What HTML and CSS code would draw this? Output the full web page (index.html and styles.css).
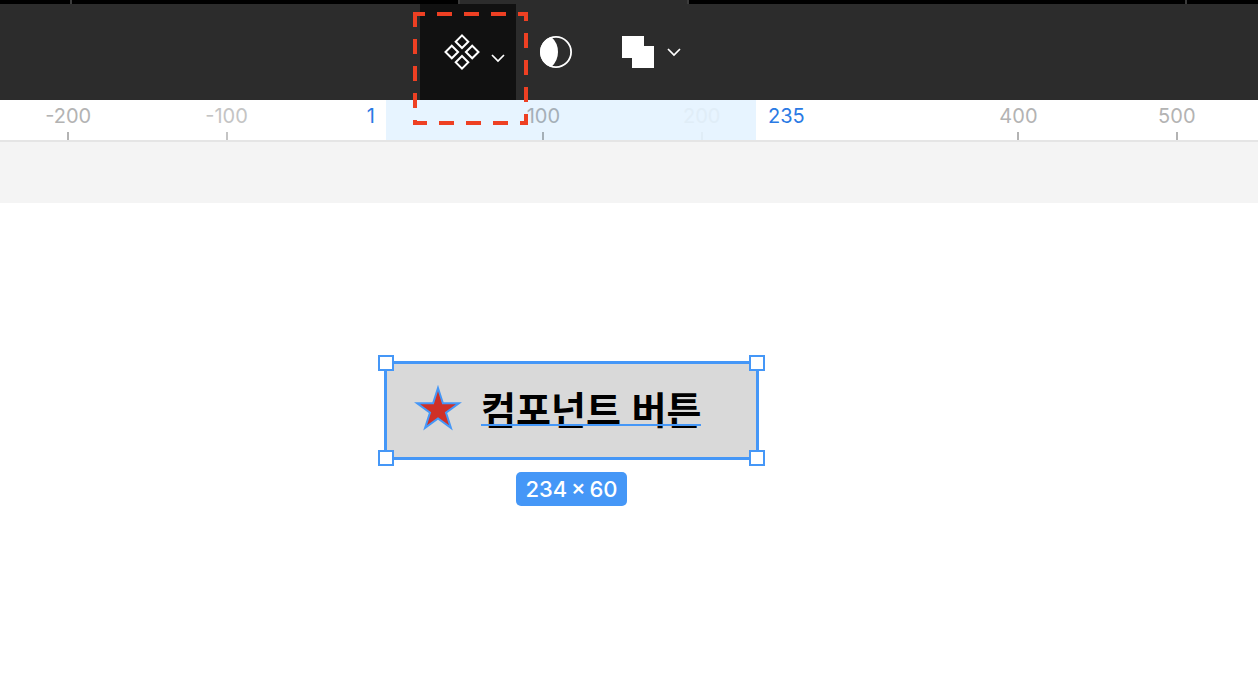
FILE: index.html
```html
<!DOCTYPE html>
<html lang="ko">
<head>
<meta charset="utf-8">
<meta name="viewport" content="width=device-width, initial-scale=1">
<title>컴포넌트 버튼</title>
<link rel="stylesheet" href="styles.css">
</head>
<body>
    <div class="tabs">
        <div class="tab tabFirst"></div>
        <div class="tab tabSecond"></div>
        <div class="tab tabActive"></div>
        <div class="tab tabLong"></div>
    </div>
    <header class="toolbar">
        <button type="button" class="tool toolActive" aria-label="Create component">
            <svg width="96" height="96" viewBox="0 0 96 96" fill="none" stroke="#fff" stroke-width="2">
                <path d="M42 31.4l6.3 6.3-6.3 6.3-6.3-6.3zM31.8 41.7l6.3 6.3-6.3 6.3-6.3-6.3zM52.2 41.7l6.3 6.3-6.3 6.3-6.3-6.3zM42 52l6.3 6.3-6.3 6.3-6.3-6.3z"/>
                <path d="M72 51l6 6 6-6" stroke-width="1.7"/>
            </svg>
        </button>
        <button type="button" class="tool" aria-label="Use as mask">
            <svg width="80" height="96" viewBox="0 0 80 96">
                <circle cx="40" cy="48" r="15.1" fill="none" stroke="#fff" stroke-width="1.8"/>
                <path d="M35 32.8a16 16 0 0 0 0 30.4q7-6 7-15.2t-7-15.2z" fill="#fff"/>
            </svg>
        </button>
        <button type="button" class="tool" aria-label="Union selection">
            <svg width="100" height="96" viewBox="0 0 100 96">
                <path d="M26 32h22v10h10v22H36V54H26z" fill="#fff"/>
                <path d="M72 45l6 6 6-6" fill="none" stroke="#fff" stroke-width="1.7"/>
            </svg>
        </button>
    </header>

    <div class="ruler">
        <div class="range">
            <span class="rangeStart">1</span>
            <span class="rangeEnd">235</span>
        </div>
        <div class="ticks">
            <div class="tick">-200</div>
            <div class="tick tickLight">-100</div>
            <div></div>
            <div class="tick tickInside">100</div>
            <div class="tick tickFaded">200</div>
            <div></div>
            <div class="tick">400</div>
            <div class="tick">500</div>
        </div>
    </div>

    <main class="canvas">
        <div class="frame">
            <div class="selection">
                <div class="component">
                    <svg class="star" width="50" height="50" viewBox="0 0 50 50">
                        <path d="M25 5L29.9 20.2H45.9L33 29.6L37.9 44.8L25 35.4L12.1 44.8L17 29.6L4.1 20.2H20.1z" fill="#cf3027" stroke="#4597f7" stroke-width="2"/>
                    </svg>
                    <span class="label">컴포넌트 버튼</span>
                    <i class="handle topLeft"></i>
                    <i class="handle topRight"></i>
                    <i class="handle bottomLeft"></i>
                    <i class="handle bottomRight"></i>
                </div>
                <div class="size">234&thinsp;×&thinsp;60</div>
            </div>
        </div>
    </main>

    <!-- marks the component button -->
    <svg class="marker" width="115" height="113" viewBox="0 0 115 113">
        <rect x="2" y="2" width="111" height="109" fill="none" stroke="#ee4023" stroke-width="4" stroke-dasharray="15 12" stroke-dashoffset="5"/>
    </svg>
</body>
</html>
```
FILE: styles.css
```css
* {
    box-sizing: border-box;
}

body {
    margin: 0;
    min-height: 100vh;
    display: flex;
    flex-direction: column;
    position: relative;
    background: #ffffff;
    font-family: Inter, "Noto Sans CJK KR", sans-serif;
}

.tabs {
    display: flex;
    height: 4px;
    background: #000000;
}

.tab {
    border-right: 2px solid #3c3c3c;
}

.tabFirst {
    width: 72px;
}

.tabSecond {
    width: 388px;
}

.tabActive {
    width: 229px;
    background: #2c2c2c;
}

.tabLong {
    width: 498px;
}

.toolbar {
    display: flex;
    height: 96px;
    padding-left: 420px;
    background: #2c2c2c;
}

.tool {
    padding: 0;
    border: 0;
    background: none;
    cursor: pointer;
}

.tool svg {
    display: block;
}

.toolActive {
    background: #111111;
}

.ruler {
    position: relative;
    height: 42px;
    border-bottom: 2px solid #e5e5e5;
    overflow: hidden;
    font-size: 20px;
    line-height: 32px;
}

.range {
    position: absolute;
    left: 386px;
    width: 370px;
    height: 40px;
    background: #e7f4ff;
    color: #2a7ae4;
}

.rangeStart,
.rangeEnd {
    position: absolute;
    top: 0;
}

.rangeStart {
    right: 100%;
    padding-right: 11px;
}

.rangeEnd {
    left: 100%;
    padding-left: 12px;
}

/* each column is 100 units wide, its tick stands in the middle */
.ticks {
    position: relative;
    display: grid;
    grid-template-columns: repeat(8, 1fr);
    margin: 0 2px 0 -11px;
}

.tick {
    display: flex;
    flex-direction: column;
    align-items: center;
    height: 40px;
    color: #b3b3b3;
}

.tick::after {
    content: "";
    width: 2px;
    height: 8px;
    background: currentColor;
}

.tickLight {
    color: #c4c4c4;
}

.tickInside {
    color: #a5afb7;
}

.tickFaded {
    color: #e0edf7;
}

.canvas {
    flex: 1;
    padding-top: 61px;
    background: #f4f4f4;
    display: flex;
}

.frame {
    flex: 1;
    padding: 158px 0 0 384px;
    background: #ffffff;
}

.selection {
    display: inline-flex;
    flex-direction: column;
    align-items: center;
    gap: 12px;
}

.component {
    position: relative;
    display: flex;
    align-items: center;
    width: 375px;
    height: 99px;
    padding: 0 0 6px 26px;
    border: 3px solid #4597f7;
    background: #d9d9d9;
}

.label {
    position: relative;
    margin-left: 18px;
    font-family: "Noto Sans CJK KR", sans-serif;
    font-size: 38px;
    font-weight: bold;
    line-height: 32px;
    color: #000000;
}

/* the baseline runs over the letters */
.label::after {
    content: "";
    position: absolute;
    left: 0;
    right: 0;
    bottom: -2px;
    height: 2px;
    background: #4597f7;
}

.handle {
    position: absolute;
    width: 16px;
    height: 16px;
    border: 2px solid #4597f7;
    background: #ffffff;
}

.topLeft {
    top: -9px;
    left: -9px;
}

.topRight {
    top: -9px;
    right: -9px;
}

.bottomLeft {
    bottom: -9px;
    left: -9px;
}

.bottomRight {
    bottom: -9px;
    right: -9px;
}

.size {
    padding: 0 9px;
    border-radius: 5px;
    background: #4597f7;
    font-size: 22px;
    font-weight: 500;
    line-height: 34px;
    color: #ffffff;
}

.marker {
    position: absolute;
    top: 12px;
    left: 413px;
    pointer-events: none;
}
```
